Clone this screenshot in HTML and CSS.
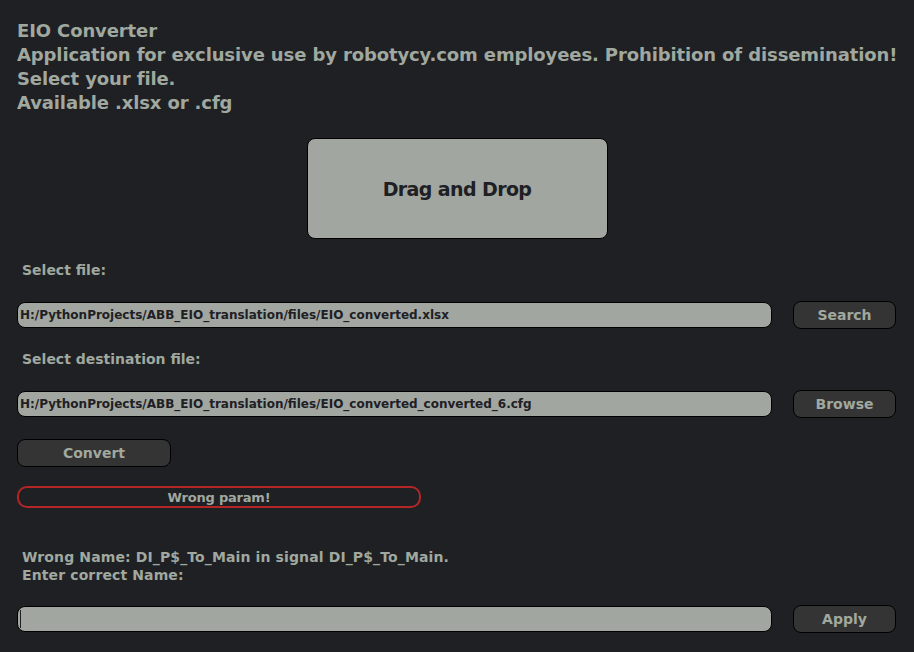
FILE: index.html
```html
<!DOCTYPE html>
<html>
<head>
<meta charset="utf-8">
<link rel="stylesheet" href="styles.css">
</head>
<body>
<div class="app">
  <div class="header">
    <div>EIO Converter</div>
    <div>Application for exclusive use by robotycy.com employees. Prohibition of dissemination!</div>
    <div>Select your file.</div>
    <div>Available .xlsx or .cfg</div>
  </div>
  <div class="drop-wrap"><div class="drop">Drag and Drop</div></div>
  <div class="label l1">Select file:</div>
  <div class="row r1">
    <div class="field">H:/PythonProjects/ABB_EIO_translation/files/EIO_converted.xlsx</div>
    <div class="btn">Search</div>
  </div>
  <div class="label l2">Select destination file:</div>
  <div class="row r2">
    <div class="field">H:/PythonProjects/ABB_EIO_translation/files/EIO_converted_converted_6.cfg</div>
    <div class="btn">Browse</div>
  </div>
  <div class="btn convert">Convert</div>
  <div class="status">Wrong param!</div>
  <div class="label msg">Wrong Name: DI_P$_To_Main in signal DI_P$_To_Main.<br>Enter correct Name:</div>
  <div class="row r3">
    <div class="field empty"><span class="caret"></span></div>
    <div class="btn">Apply</div>
  </div>
</div>
</body>
</html>
```
FILE: styles.css
```css
html, body {
  margin: 0;
  padding: 0;
  background: #1e2024;
}
.app {
  width: 914px;
  height: 652px;
  box-sizing: border-box;
  padding: 19px 0 0 17px;
  font-family: "DejaVu Sans", Verdana, sans-serif;
  font-weight: bold;
  color: #a0a89f;
  overflow: hidden;
}
.header {
  font-size: 18px;
  line-height: 24px;
  letter-spacing: -0.12px;
  white-space: nowrap;
}
.drop-wrap {
  width: 880px;
  display: flex;
  justify-content: center;
  margin-top: 23px;
}
.drop {
  width: 301px;
  height: 101px;
  box-sizing: border-box;
  border: 1px solid #000;
  border-radius: 8px;
  background: #a1a6a0;
  color: #1e2024;
  font-size: 19px;
  display: flex;
  align-items: center;
  justify-content: center;
  letter-spacing: -0.6px;
}
.label {
  font-size: 14px;
  line-height: 18px;
  padding-left: 5px;
}
.l1 { margin-top: 22px; }
.l2 { margin-top: 21px; }
.row {
  display: flex;
  align-items: center;
  height: 28px;
  gap: 21px;
}
.r1 { margin-top: 22px; }
.r2 { margin-top: 22px; }
.r3 { margin-top: 21px; }
.field {
  width: 755px;
  height: 26px;
  box-sizing: border-box;
  border: 1px solid #000;
  border-radius: 8px;
  background: #a1a6a0;
  color: #1e2024;
  font-size: 12px;
  line-height: 24px;
  padding-left: 2px;
  white-space: nowrap;
  overflow: hidden;
}
.field.empty {
  display: flex;
  align-items: center;
}
.caret {
  width: 1px;
  height: 18px;
  background: #1e2024;
}
.btn {
  width: 103px;
  height: 28px;
  box-sizing: border-box;
  border: 1px solid #000;
  border-radius: 8px;
  background: #343434;
  color: #a0a89f;
  font-size: 14px;
  display: flex;
  align-items: center;
  justify-content: center;
}
.convert {
  width: 154px;
  margin-top: 21px;
}
.status {
  width: 404px;
  height: 22px;
  box-sizing: border-box;
  margin-top: 19px;
  border: 2px solid #b42626;
  border-radius: 10px;
  font-size: 13px;
  display: flex;
  align-items: center;
  justify-content: center;
  letter-spacing: -0.2px;
}
.msg {
  margin-top: 40px;
  letter-spacing: 0.12px;
}
```
